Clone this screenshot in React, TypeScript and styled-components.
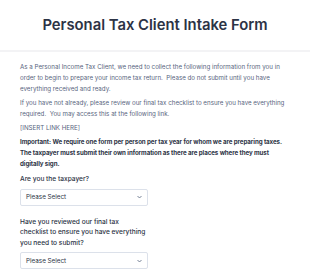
import React, { FC } from "react";
import styled, { createGlobalStyle } from "styled-components";

const GlobalStyle = createGlobalStyle`
  html, body {
    margin: 0;
    padding: 0;
    background: #ffffff;
  }
  body {
    font-family: Inter, "Noto Sans", sans-serif;
  }
`;

const Page = styled.div`
  width: 310px;
  background: #ffffff;
`;

const Header = styled.header`
  height: 50px;
  display: flex;
  align-items: center;
  justify-content: center;
  border-bottom: 2px solid #f3f3f5;
`;

const Title = styled.h1`
  margin: 0;
  font-size: 14.8px;
  font-weight: 600;
  color: #2c3345;
`;

const Body = styled.section`
  padding: 9px 25px 0 20px;
`;

const Para = styled.p<{ $bold?: boolean }>`
  margin: 0 0 3px 0;
  font-size: 6.2px;
  line-height: 11px;
  color: ${(p) => (p.$bold ? "#2c3345" : "#57647e")};
  font-weight: ${(p) => (p.$bold ? 700 : 400)};
  letter-spacing: ${(p) => (p.$bold ? "-0.08px" : "0")};
  margin-right: ${(p) => (p.$bold ? "-6px" : "0")};
`;

const Question = styled.div`
  margin-top: 5px;
  margin-bottom: 11px;
  width: 128px;
`;

const Label = styled.label`
  display: block;
  font-size: 6.6px;
  line-height: 10.5px;
  font-weight: 500;
  color: #2c3345;
  margin-bottom: 4px;
`;

const SelectBox = styled.div`
  height: 17px;
  box-sizing: border-box;
  border: 1px solid #dce1ea;
  border-radius: 2px;
  display: flex;
  align-items: center;
  justify-content: space-between;
  padding: 0 5px 0 5px;
  font-size: 6.3px;
  color: #2c3345;
  background: #ffffff;
`;

const Chevron: FC = () => (
  <svg width="5" height="4" viewBox="0 0 10 6">
    <path d="M1 1l4 4 4-4" fill="none" stroke="#57647e" strokeWidth="1.6" />
  </svg>
);

const Select: FC = () => (
  <SelectBox>
    <span>Please Select</span>
    <Chevron />
  </SelectBox>
);

const App: FC = () => {
  return (
    <Page>
      <GlobalStyle />
      <Header>
        <Title>Personal Tax Client Intake Form</Title>
      </Header>
      <Body>
        <Para>
          As a Personal Income Tax Client, we need to collect the following information from you in
          order to begin to prepare your income tax return.&nbsp; Please do not submit until you have
          everything received and ready.
        </Para>
        <Para>
          If you have not already, please review our final tax checklist to ensure you have everything
          <br />
          required.&nbsp; You may access this at the following link.
        </Para>
        <Para>[INSERT LINK HERE]</Para>
        <Para $bold>
          Important: We require one form per person per tax year for whom we are preparing taxes.
          The taxpayer must submit their own information as there are places where they must
          digitally sign.
        </Para>
        <Question>
          <Label>Are you the taxpayer?</Label>
          <Select />
        </Question>
        <Question>
          <Label>
            Have you reviewed our final tax
            <br />
            checklist to ensure you have everything you need to submit?
          </Label>
          <Select />
        </Question>
      </Body>
    </Page>
  );
};

export default App;
